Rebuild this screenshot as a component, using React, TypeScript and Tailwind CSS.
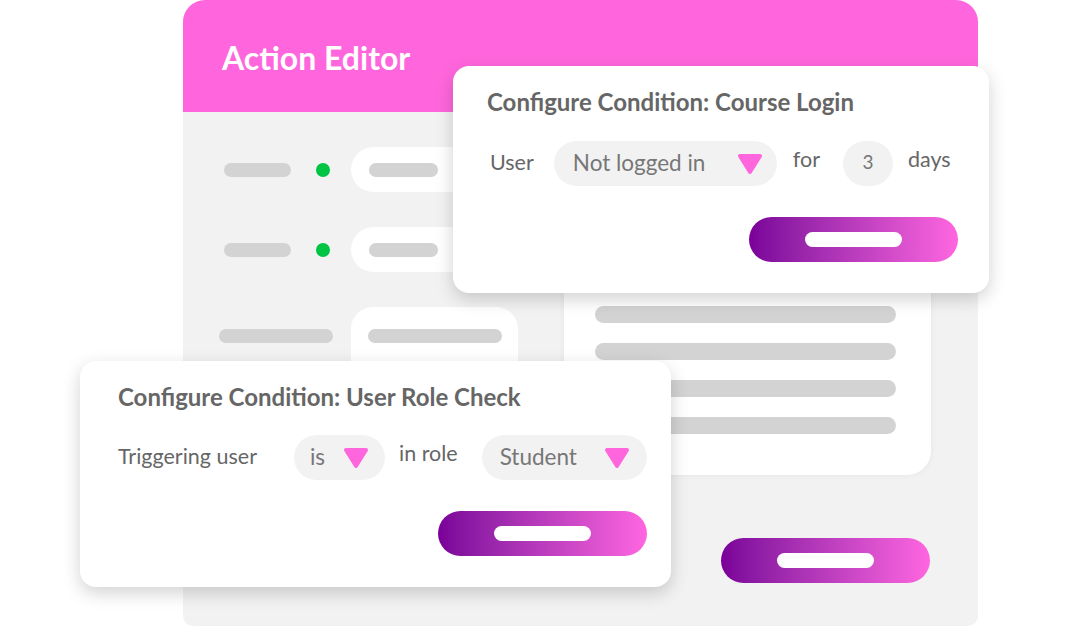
import React from 'react';

const font = { fontFamily: 'Lato, "Noto Sans", sans-serif' };

function Caret() {
  return (
    <svg width="26" height="22" viewBox="0 0 26 22" className="shrink-0">
      <polygon
        points="3,3 23,3 13,19"
        fill="#ff66dd"
        stroke="#ff66dd"
        strokeWidth="4"
        strokeLinejoin="round"
      />
    </svg>
  );
}

function GradientButton({ className = '' }: { className?: string }) {
  return (
    <div
      className={`flex h-[45px] w-[209px] items-center justify-center rounded-full bg-linear-to-r from-[#7a0099] to-[#ff66e0] ${className}`}
    >
      <div className="h-[15px] w-[97px] rounded-full bg-white" />
    </div>
  );
}

function Bar({ w }: { w: string }) {
  return <div className={`h-[14px] rounded-full bg-[#d3d3d3] ${w}`} />;
}

export default function App() {
  return (
    <div className="relative h-[627px] w-[1066px] overflow-hidden bg-white" style={font}>
      {/* back window */}
      <div className="absolute left-[183px] top-0 flex h-[626px] w-[795px] flex-col overflow-hidden rounded-t-[22px] rounded-b-[10px] bg-[#f2f2f2]">
        <div className="flex h-[112px] shrink-0 items-center bg-[#ff66dd] pl-[39px] pt-[4px]">
          <h1 className="text-[32px] font-bold text-white">Action Editor</h1>
        </div>
        <div className="flex flex-1 pt-[35px]">
          <div className="flex w-[381px] flex-col gap-[35px] pl-[41px]">
            <div className="flex items-center">
              <Bar w="w-[67px]" />
              <div className="ml-[25px] h-[14px] w-[14px] rounded-full bg-[#00c443]" />
              <div className="ml-[21px] flex h-[45px] w-[167px] items-center rounded-full bg-white pl-[18px]">
                <Bar w="w-[69px]" />
              </div>
            </div>
            <div className="flex items-center">
              <Bar w="w-[67px]" />
              <div className="ml-[25px] h-[14px] w-[14px] rounded-full bg-[#00c443]" />
              <div className="ml-[21px] flex h-[45px] w-[167px] items-center rounded-full bg-white pl-[18px]">
                <Bar w="w-[69px]" />
              </div>
            </div>
            <div className="-ml-[5px] flex items-start">
              <div className="mt-[22px]">
                <Bar w="w-[114px]" />
              </div>
              <div className="ml-[18px] h-[200px] w-[167px] rounded-t-[22px] bg-white px-[17px] pt-[22px]">
                <Bar w="w-[134px]" />
              </div>
            </div>
          </div>
          <div className="flex flex-col">
            <div className="flex h-[328px] w-[367px] flex-col justify-end gap-[20px] rounded-b-[24px] bg-white pl-[31px] pr-[35px] pb-[41px] shadow-[0_0_6px_rgba(0,0,0,0.06)]">
              <div className="h-[17px] rounded-full bg-[#d3d3d3]" />
              <div className="h-[17px] rounded-full bg-[#d3d3d3]" />
              <div className="h-[17px] rounded-full bg-[#d3d3d3]" />
              <div className="h-[17px] rounded-full bg-[#d3d3d3]" />
            </div>
            <GradientButton className="ml-[157px] mt-[63px]" />
          </div>
        </div>
      </div>

      {/* top card */}
      <div className="absolute left-[453px] top-[66px] flex h-[227px] w-[536px] flex-col rounded-[16px] bg-white pl-[34px] pr-[31px] pt-[22px] shadow-[0_6px_18px_rgba(0,0,0,0.18)]">
        <h2 className="text-[24px] font-bold leading-[28px] text-[#666]">Configure Condition: Course Login</h2>
        <div className="mt-[25px] flex items-center text-[21.5px] text-[#666]">
          <span className="ml-[3px] -mt-[3px]">User</span>
          <div className="ml-[20px] flex h-[45px] w-[223px] items-center justify-between rounded-full bg-[#f2f2f2] pl-[19px] pr-[14px] text-[#777]">
            <span className="-mt-[2px] text-[22.5px]">Not logged in</span>
            <Caret />
          </div>
          <span className="ml-[16px] -mt-[8px]">for</span>
          <div className="ml-[23px] flex h-[45px] w-[50px] items-center justify-center rounded-full bg-[#f2f2f2] text-[19px] text-[#777]">
            <span className="-mt-[2px]">3</span>
          </div>
          <span className="ml-[15px] -mt-[8px]">days</span>
        </div>
        <GradientButton className="ml-auto mt-[31px]" />
      </div>

      {/* bottom card */}
      <div className="absolute left-[80px] top-[361px] flex h-[226px] w-[591px] flex-col rounded-[16px] bg-white pl-[38px] pr-[24px] pt-[22px] shadow-[0_6px_18px_rgba(0,0,0,0.18)]">
        <h2 className="text-[24px] font-bold leading-[28px] text-[#666]">Configure Condition: User Role Check</h2>
        <div className="mt-[24px] flex items-center text-[21.5px] text-[#666]">
          <span className="-mt-[3px]">Triggering user</span>
          <div className="ml-[37px] flex h-[45px] w-[91px] items-center justify-between rounded-full bg-[#f2f2f2] pl-[16px] pr-[16px] text-[#777]">
            <span className="-mt-[2px] text-[22.5px]">is</span>
            <Caret />
          </div>
          <span className="ml-[14px] -mt-[8px]">in role</span>
          <div className="ml-[24px] flex h-[45px] w-[165px] items-center justify-between rounded-full bg-[#f2f2f2] pl-[18px] pr-[17px] text-[#777]">
            <span className="-mt-[2px] text-[22.5px]">Student</span>
            <Caret />
          </div>
        </div>
        <GradientButton className="ml-auto mt-[31px]" />
      </div>
    </div>
  );
}
